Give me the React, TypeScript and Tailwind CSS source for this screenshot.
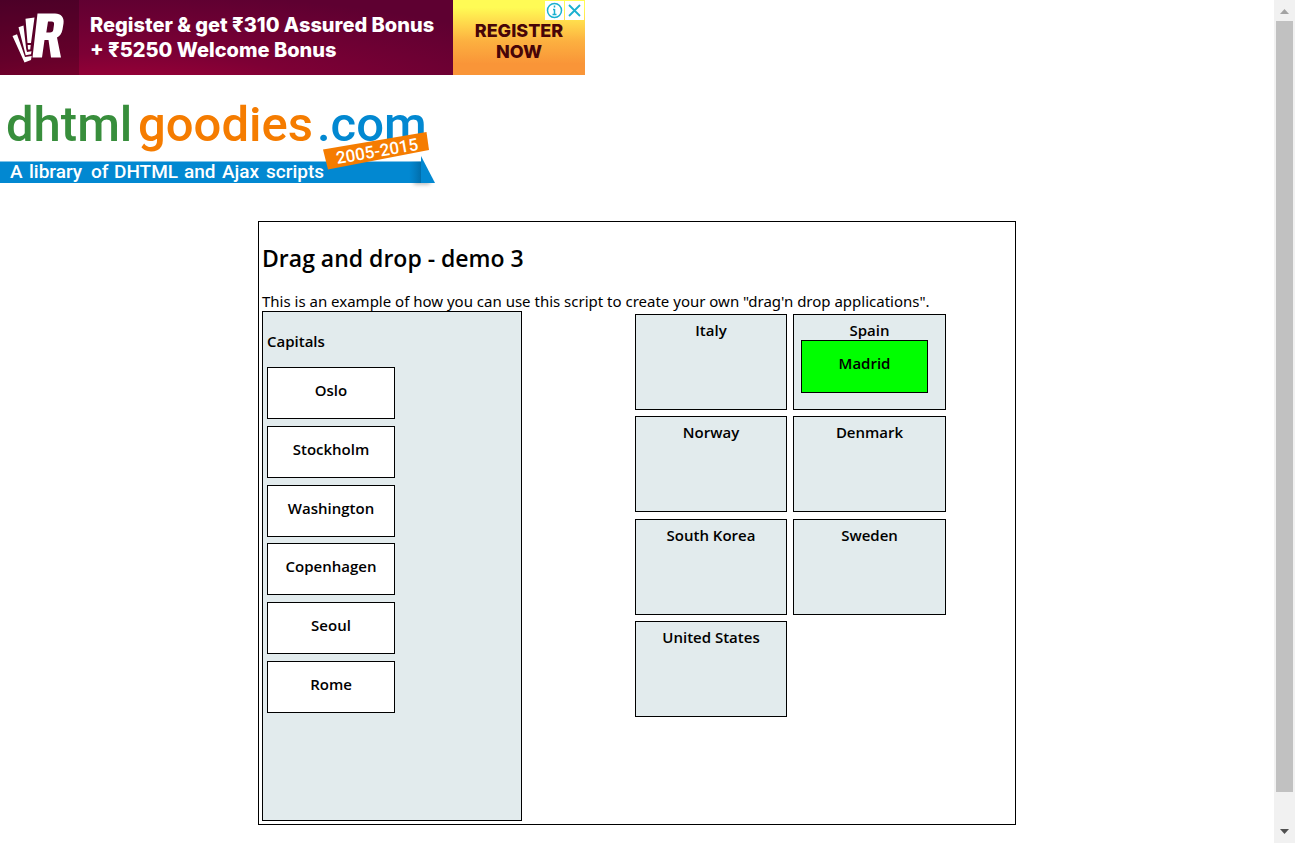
const capitals = ["Oslo", "Stockholm", "Washington", "Copenhagen", "Seoul", "Rome"];

const countries: { name: string; capital?: string }[] = [
  { name: "Italy" },
  { name: "Spain", capital: "Madrid" },
  { name: "Norway" },
  { name: "Denmark" },
  { name: "South Korea" },
  { name: "Sweden" },
  { name: "United States" },
];

function CardsLogo() {
  return (
    <svg viewBox="0 0 79 75" className="h-full w-[79px] shrink-0 bg-black/20" aria-hidden="true">
      <g fill="#fff">
        <path d="M12.500 36 17 34.300 25 57l6.700-1-.7 4-6.500 2.500Z" />
        <path d="M18.500 27.300 23.500 25.500 26.200 49l.8 3 4.500-.7-.5 3-5.300 1Z" />
        <path d="M25.500 18.800 34.500 17.500 31 43h-3.500ZM27.700 45h3l-.5 4.500h-2.200Z" />
        <path
          fillRule="evenodd"
          d="M37.500 13.500H55c6 0 9.500 4 8.500 10l-1 6c-.7 4-2.700 6.500-5.500 8L61 57.500H51L48.500 40h-4L42 57.500H32.500Zm10.500 8-1.700 11H50c2 0 3-.8 3.300-2.700l.7-5c.3-2.200-.4-3.300-2.500-3.300Z"
        />
      </g>
    </svg>
  );
}

function Banner() {
  return (
    <div className="relative flex h-[75px] w-[585px] max-w-full font-['Inter','Roboto',sans-serif]">
      <a
        href="#register"
        className="flex grow bg-[radial-gradient(ellipse_at_20%_140%,#b00038_0%,#7d0035_35%,#5e0031_75%)]"
      >
        <CardsLogo />
        <span className="grow pt-[13px] pl-[11px] text-[20px] leading-[25px] font-extrabold whitespace-nowrap text-white">
          Register &amp; get ₹310 Assured Bonus
          <br />+ ₹5250 Welcome Bonus
        </span>
        <span className="flex w-[132px] shrink-0 flex-col bg-linear-to-b from-[#fffb55] from-10% via-[#fcb040] via-55% to-[#f99538] to-85% pt-5 text-center text-[18px] leading-[21px] font-extrabold text-[#470508]">
          <span>REGISTER</span>
          <span>NOW</span>
        </span>
      </a>
      <div className="absolute top-px right-px flex gap-px">
        <button type="button" aria-label="About this ad" className="size-[19px] bg-white">
          <svg viewBox="0 0 19 19" fill="none" stroke="#1ab0cf" strokeWidth="1.500">
            <circle cx="9.500" cy="9.500" r="7" />
            <path d="M9.500 8v5.500M8 8.500h1.500M7.500 13.500h4M9.500 4.500v2" />
          </svg>
        </button>
        <button type="button" aria-label="Close ad" className="size-[19px] bg-white">
          <svg viewBox="0 0 19 19" fill="none" stroke="#1ab0cf" strokeWidth="1.800">
            <path d="m4 4 11 11M15 4 4 15" />
          </svg>
        </button>
      </div>
    </div>
  );
}

function SiteLogo() {
  return (
    <svg
      viewBox="0 0 440 95"
      className="mt-[21px] block h-[95px] w-[440px] max-w-full font-['Roboto',sans-serif]"
      role="img"
      aria-label="dhtmlgoodies.com"
    >
      <defs>
        <linearGradient id="fold" x1="0" x2="1">
          <stop offset="0" stopColor="#00568c" stopOpacity="0" />
          <stop offset="1" stopColor="#00456f" stopOpacity="0.4" />
        </linearGradient>
        <filter id="soft" x="390" y="70" width="50" height="25" filterUnits="userSpaceOnUse">
          <feGaussianBlur stdDeviation="2" />
        </filter>
      </defs>
      <g fontSize="49" fontWeight="500">
        <text x="6" y="45" fill="#388e3c">dhtml</text>
        <text x="138" y="45" fill="#f57c00">goodies</text>
        <text x="317" y="45" fill="#0288d1">.com</text>
      </g>
      <path d="M414 84h16v4h-16Z" fill="#000" fillOpacity="0.35" filter="url(#soft)" />
      <path d="M0 65.500h421V87H0Z" fill="#0288d1" />
      <path d="M409 65.500h12V87h-12Z" fill="url(#fold)" />
      <path d="M421 60v27h14Z" fill="#0288d1" />
      <text y="82" fill="#fff" fontSize="19" fontWeight="500">
        <tspan x="10">A </tspan>
        <tspan x="29">library </tspan>
        <tspan x="91">of </tspan>
        <tspan x="114">DHTML </tspan>
        <tspan x="184">and </tspan>
        <tspan x="222">Ajax </tspan>
        <tspan x="266">scripts</tspan>
      </text>
      <path d="M323 53.500 426.500 36l2.500 18-101 19.500Z" fill="#f57c00" />
      <text x="377" y="61" fill="#fff" fontSize="17" fontWeight="500" textAnchor="middle" transform="rotate(-10 377 55)">
        2005-2015
      </text>
    </svg>
  );
}

function Capital({ name, placed = false }: { name: string; placed?: boolean }) {
  return (
    <div
      draggable
      className={
        placed
          ? "mr-[17px] ml-[7px] h-[53px] cursor-move border border-black bg-[#00ff00] pt-[11px]"
          : "h-[52px] cursor-move border border-black bg-white pt-[11px]"
      }
    >
      {name}
    </div>
  );
}

function Demo() {
  return (
    <main className="mx-auto mt-[30px] mb-[18px] w-[758px] max-w-full border border-black p-[3px]">
      <h1 className="mt-[17px] text-[23px] leading-8 font-semibold">Drag and drop - demo 3</h1>
      <p className="mt-[17px] font-['Trebuchet_MS','Noto_Sans',sans-serif] text-[15px] leading-5">
        This is an example of how you can use this script to create your own "drag'n drop applications".
      </p>
      <div className="flex items-start justify-between text-[15px] leading-[22px] font-semibold">
        <section className="h-[510px] w-[260px] border border-black bg-[#e2ebed] px-1">
          <h2 className="mt-[18px]">Capitals</h2>
          <div className="mt-[15px] flex h-[346px] w-[128px] flex-col justify-between text-center">
            {capitals.map((name) => (
              <Capital key={name} name={name} />
            ))}
          </div>
        </section>
        <section className="mt-[3px] mr-[66px] grid h-[403px] grid-cols-[152px_153px] content-between gap-x-1.5 text-center">
          {countries.map(({ name, capital }) => (
            <div key={name} className="h-24 border border-black bg-[#e2ebed] pt-1">
              <div className="h-[21px]">{name}</div>
              {capital && <Capital name={capital} placed />}
            </div>
          ))}
        </section>
      </div>
    </main>
  );
}

function ScrollRail() {
  return (
    <div className="flex w-[21px] shrink-0 flex-col items-center bg-[#f1f1f1]" aria-hidden="true">
      <svg viewBox="0 0 17 21" className="h-[21px] w-[17px]">
        <path d="M4 14h9L8.500 9Z" fill="#a3a3a3" />
      </svg>
      <div className="w-[17px] grow bg-[#c1c1c1]" />
      <svg viewBox="0 0 17 51" className="h-[51px] w-[17px]">
        <path d="M4 37h9l-4.500 5Z" fill="#505050" />
      </svg>
    </div>
  );
}

export default function App() {
  return (
    <div className="flex min-h-screen bg-white font-['Trebuchet_MS','Open_Sans',sans-serif] text-black">
      <div className="min-w-0 grow">
        <Banner />
        <SiteLogo />
        <Demo />
      </div>
      <ScrollRail />
    </div>
  );
}
